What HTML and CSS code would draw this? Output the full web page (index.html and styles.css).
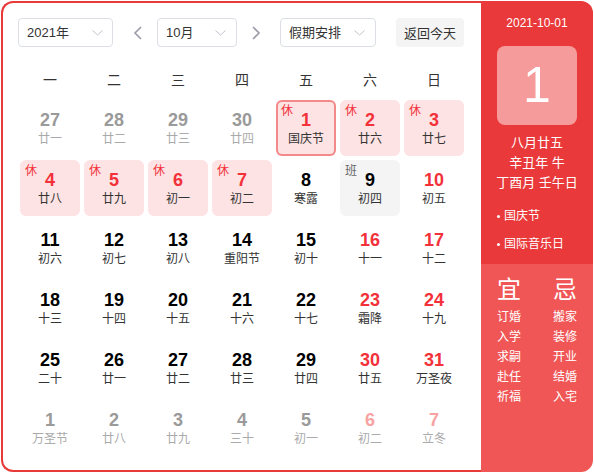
FILE: index.html
```html
<!DOCTYPE html>
<html lang="zh-CN">
<head>
<meta charset="utf-8">
<title>万年历</title>
<link rel="stylesheet" href="styles.css">
</head>
<body>
<div class="cal">
  <div class="main">
    <div class="toolbar">
      <div class="select sel-year"><span>2021年</span><svg class="chev" width="11" height="6" viewBox="0 0 11 6"><polyline points="0.5,0.5 5.5,5 10.5,0.5" fill="none" stroke="#c0c4cc" stroke-width="1"/></svg></div>
      <span class="arrow prev"><svg width="10" height="14" viewBox="0 0 10 14"><polyline points="8,1 2,7 8,13" fill="none" stroke="#9b9ba8" stroke-width="1.6"/></svg></span>
      <div class="select sel-month"><span>10月</span><svg class="chev" width="11" height="6" viewBox="0 0 11 6"><polyline points="0.5,0.5 5.5,5 10.5,0.5" fill="none" stroke="#c0c4cc" stroke-width="1"/></svg></div>
      <span class="arrow next"><svg width="10" height="14" viewBox="0 0 10 14"><polyline points="2,1 8,7 2,13" fill="none" stroke="#9b9ba8" stroke-width="1.6"/></svg></span>
      <div class="select sel-holiday"><span>假期安排</span><svg class="chev" width="11" height="6" viewBox="0 0 11 6"><polyline points="0.5,0.5 5.5,5 10.5,0.5" fill="none" stroke="#c0c4cc" stroke-width="1"/></svg></div>
      <div class="today-btn">返回今天</div>
    </div>
    <div class="weekdays">
      <span>一</span><span>二</span><span>三</span><span>四</span><span>五</span><span>六</span><span>日</span>
    </div>
    <div class="grid">
      <div class="day other"><b>27</b><i>廿一</i></div>
      <div class="day other"><b>28</b><i>廿二</i></div>
      <div class="day other"><b>29</b><i>廿三</i></div>
      <div class="day other"><b>30</b><i>廿四</i></div>
      <div class="day rest selected"><em>休</em><b>1</b><i>国庆节</i></div>
      <div class="day rest"><em>休</em><b>2</b><i>廿六</i></div>
      <div class="day rest"><em>休</em><b>3</b><i>廿七</i></div>

      <div class="day rest"><em>休</em><b>4</b><i>廿八</i></div>
      <div class="day rest"><em>休</em><b>5</b><i>廿九</i></div>
      <div class="day rest"><em>休</em><b>6</b><i>初一</i></div>
      <div class="day rest"><em>休</em><b>7</b><i>初二</i></div>
      <div class="day"><b>8</b><i>寒露</i></div>
      <div class="day work"><em>班</em><b>9</b><i>初四</i></div>
      <div class="day weekend"><b>10</b><i>初五</i></div>

      <div class="day"><b>11</b><i>初六</i></div>
      <div class="day"><b>12</b><i>初七</i></div>
      <div class="day"><b>13</b><i>初八</i></div>
      <div class="day"><b>14</b><i>重阳节</i></div>
      <div class="day"><b>15</b><i>初十</i></div>
      <div class="day weekend"><b>16</b><i>十一</i></div>
      <div class="day weekend"><b>17</b><i>十二</i></div>

      <div class="day"><b>18</b><i>十三</i></div>
      <div class="day"><b>19</b><i>十四</i></div>
      <div class="day"><b>20</b><i>十五</i></div>
      <div class="day"><b>21</b><i>十六</i></div>
      <div class="day"><b>22</b><i>十七</i></div>
      <div class="day weekend"><b>23</b><i>霜降</i></div>
      <div class="day weekend"><b>24</b><i>十九</i></div>

      <div class="day"><b>25</b><i>二十</i></div>
      <div class="day"><b>26</b><i>廿一</i></div>
      <div class="day"><b>27</b><i>廿二</i></div>
      <div class="day"><b>28</b><i>廿三</i></div>
      <div class="day"><b>29</b><i>廿四</i></div>
      <div class="day weekend"><b>30</b><i>廿五</i></div>
      <div class="day weekend"><b>31</b><i>万圣夜</i></div>

      <div class="day other"><b>1</b><i>万圣节</i></div>
      <div class="day other"><b>2</b><i>廿八</i></div>
      <div class="day other"><b>3</b><i>廿九</i></div>
      <div class="day other"><b>4</b><i>三十</i></div>
      <div class="day other"><b>5</b><i>初一</i></div>
      <div class="day other weekend"><b>6</b><i>初二</i></div>
      <div class="day other weekend"><b>7</b><i>立冬</i></div>
    </div>
  </div>
  <div class="side">
    <div class="side-top">
      <div class="side-date">2021-10-01</div>
      <div class="big-day">1</div>
      <div class="lunar">
        <div>八月廿五</div>
        <div>辛丑年 牛</div>
        <div>丁酉月 壬午日</div>
      </div>
      <ul class="fests">
        <li>国庆节</li>
        <li>国际音乐日</li>
      </ul>
    </div>
    <div class="side-bottom">
      <div class="col">
        <div class="head">宜</div>
        <div>订婚</div><div>入学</div><div>求嗣</div><div>赴任</div><div>祈福</div>
      </div>
      <div class="col">
        <div class="head">忌</div>
        <div>搬家</div><div>装修</div><div>开业</div><div>结婚</div><div>入宅</div>
      </div>
    </div>
  </div>
</div>
</body>
</html>
```

FILE: styles.css
```css
* { box-sizing: border-box; }
html, body { margin: 0; padding: 0; background: #ffffff; }
body {
  font-family: "Liberation Sans", "Noto Sans CJK SC", sans-serif;
  color: #333333;
}
.cal {
  margin: 1px;
  width: 592px;
  height: 471px;
  display: flex;
}
.main {
  width: 480px;
  height: 471px;
  border: 2px solid #e93a3a;
  border-right: none;
  border-radius: 12px 0 0 12px;
  padding: 15px 0 0 15px;
  background: #fff;
}
.toolbar {
  display: flex;
  align-items: center;
  height: 29px;
}
.select {
  height: 29px;
  border: 1px solid #dcdfe6;
  border-radius: 4px;
  display: flex;
  align-items: center;
  justify-content: space-between;
  padding: 0 9px 0 8px;
  font-size: 13px;
  color: #333;
  line-height: 1;
}
.sel-year { width: 95px; }
.sel-month { width: 80px; padding-right: 10px; }
.sel-holiday { width: 96px; padding-right: 10px; }
.chev { display: block; }
.arrow { display: flex; width: 10px; height: 14px; }
.arrow svg { display: block; }
.prev { margin: 0 14px 0 20px; }
.next { margin: 0 19px 0 14px; }
.today-btn {
  margin-left: 20px;
  width: 68px;
  height: 29px;
  border-radius: 4px;
  background: #f4f4f5;
  font-size: 13px;
  display: flex;
  align-items: center;
  justify-content: center;
  color: #333;
}
.weekdays {
  margin: 13px 0 0 2px;
  height: 40px;
  display: grid;
  grid-template-columns: repeat(7, 60px);
  column-gap: 4px;
  align-items: center;
  font-size: 14px;
  color: #333;
  text-align: center;
  line-height: 20px;
}
.grid {
  margin-left: 2px;
  display: grid;
  grid-template-columns: repeat(7, 60px);
  grid-auto-rows: 56px;
  gap: 4px;
}
.day {
  position: relative;
  border-radius: 6px;
  padding-top: 10px;
  text-align: center;
}
.day b {
  display: block;
  font-size: 18px;
  line-height: 20px;
  font-weight: bold;
  color: #000;
}
.day i {
  display: block;
  font-style: normal;
  font-size: 12px;
  line-height: 18px;
  color: #333;
}
.day em {
  position: absolute;
  left: 5px;
  top: 3px;
  font-style: normal;
  font-size: 12px;
  line-height: 16px;
}
.day.weekend b { color: #f2313a; }
.day.other b { color: #9a9a9a; }
.day.other i { color: #aaaaaa; }
.day.other.weekend b { color: #f7a3a3; }
.day.rest { background: #fde3e3; }
.day.rest b { color: #f2313a; }
.day.rest em { color: #f2313a; }
.day.work { background: #f4f4f5; }
.day.work em { color: #666; }
.day.selected { box-shadow: inset 0 0 0 2px #f28a8a; }

.side {
  width: 112px;
  height: 471px;
  border-radius: 0 12px 12px 0;
  overflow: hidden;
  display: flex;
  flex-direction: column;
  color: #fff;
}
.side-top {
  height: 263px;
  background: #e9393a;
  padding-top: 14px;
  display: flex;
  flex-direction: column;
  align-items: center;
}
.side-date {
  font-size: 12px;
  line-height: 16px;
}
.big-day {
  margin-top: 15px;
  width: 80px;
  height: 79px;
  border-radius: 8px;
  background: #f59b9b;
  font-size: 50px;
  line-height: 79px;
  text-align: center;
}
.lunar {
  margin-top: 8px;
  font-size: 13px;
  line-height: 20px;
  text-align: center;
}
.fests {
  list-style: none;
  margin: 9px 0 0 0;
  padding: 0 0 0 16px;
  align-self: stretch;
  font-size: 12px;
  line-height: 28px;
}
.fests li { display: flex; align-items: center; }
.fests li::before {
  content: "";
  width: 3px;
  height: 3px;
  border-radius: 50%;
  background: #fff;
  margin-right: 4px;
}
.side-bottom {
  flex: 1;
  background: #f05656;
  padding: 12px 16px 0 16px;
  display: flex;
  justify-content: space-between;
}
.col {
  width: 24px;
  font-size: 12px;
  line-height: 20px;
  text-align: center;
}
.col .head {
  font-size: 24px;
  line-height: 28px;
  margin-bottom: 3px;
}
```
